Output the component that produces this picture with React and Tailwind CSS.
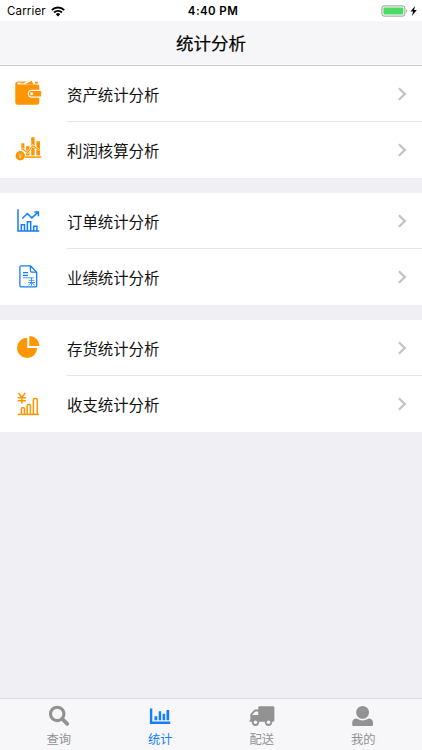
const ORANGE = '#ff9500'
const BLUE = '#147efb'

const RowIcon = ({ children }) => (
  <svg width="28" height="28" viewBox="0 0 28 28" fill="none" className="shrink-0">
    {children}
  </svg>
)

const WalletIcon = () => (
  <RowIcon>
    <path d="M1.3 4.2C1.3 2.4 2.4 1.5 4 1.5h6l-1 1H4.4c-1.6 0-1.6 1.9 0 1.9h18.8c1.4 0 2.1.8 2.1 2.1v3.2H17.8a4 4 0 0 0 0 8h7.5v4.6c0 1.7-.9 2.5-2.5 2.5H3.9c-1.7 0-2.6-.8-2.6-2.5Z" fill={ORANGE} />
    <path d="M10.8 4.4 17.6.7 19.6 4.4ZM20.6 1.7h2.6c.7 0 1 .4 1 1v.8h-3ZM5.5 3.3l5.2-1.7h1.8L9.4 3.6Z" fill={ORANGE} />
    <path d="M17.6 11h9.6v5.4h-9.6a2.7 2.7 0 0 1 0-5.4Z" fill={ORANGE} />
    <circle cx="17.7" cy="13.7" r="1.5" fill="#fff" />
  </RowIcon>
)

const ProfitIcon = () => (
  <RowIcon>
    <path d="M7.4 7.3h3V14h-3ZM12.1 10.2h3.4v9.3h-3.4ZM17.2 1.3h3.4v18.2h-3.4ZM22.4 5.3h3.6v14.2h-3.6Z" fill={ORANGE} />
    <path d="m7.5 12.5 6 3.9 5.3-6.7 6.6 4.5" stroke="#fff" strokeWidth="2.2" />
    <path d="m7.5 12.5 6 3.9 5.3-6.7 6.6 4.5" stroke={ORANGE} strokeWidth="1.1" />
    <path d="M11 21.1h16.2" stroke={ORANGE} strokeWidth="1.5" />
    <circle cx="6.3" cy="19.7" r="4.7" fill={ORANGE} />
    <path d="m4.7 17.3 1.6 2.2 1.6-2.2M6.3 19.5v3M4.9 20h2.8M4.9 21.3h2.8" stroke="#ffe0b3" strokeWidth=".6" />
  </RowIcon>
)

const OrderIcon = () => (
  <RowIcon>
    <g stroke={BLUE} strokeWidth="1.5">
      <path d="M4 2.3v21.6h21.3" />
      <path d="M7.3 24v-6.2h3.2V24M13.4 24v-9.3h3.3V24M19.7 24v-4.7h3.2V24" />
      <path d="m8.3 11.5 5.1-5 4.4 4.4 6.4-5.8M20.3 5h4.1v4.2" />
    </g>
  </RowIcon>
)

const DocumentIcon = () => (
  <RowIcon>
    <path d="M16.4 2.8H7.2a1.3 1.3 0 0 0-1.3 1.3v18.4a1.3 1.3 0 0 0 1.3 1.3h14.2a1.3 1.3 0 0 0 1.3-1.3V9.1Zm0 0v5a1.3 1.3 0 0 0 1.3 1.3h5" stroke={BLUE} strokeWidth="1.3" strokeLinejoin="round" />
    <path d="M9 9.7h5M9 12.3h5" stroke={BLUE} strokeWidth="1.2" />
    <path d="M9 14.8h10.7M14.6 17.3h5.8M17.5 14.8v8M14 19.5h7M17.5 19.4l-3.2 3M17.5 19.4l3.2 3" stroke={BLUE} strokeWidth=".75" />
  </RowIcon>
)

const PieIcon = () => (
  <RowIcon>
    <path d="M13.2 3.8v10.3h10A10.1 10.1 0 1 1 13.2 3.8Z" fill={ORANGE} />
    <path d="M15.3 2c5.5 0 10 4.4 10 10h-10Z" fill={ORANGE} />
  </RowIcon>
)

const IncomeIcon = () => (
  <RowIcon>
    <g stroke={ORANGE} strokeWidth="1.5">
      <path d="m4.5 3 3.4 4.4L11.3 3M7.9 7.3v6.5M3.7 7.8H12M3.7 10.8H12" />
      <path d="M3.6 24.4H25" />
      <path d="M7.4 24v-5.3c0-.6.4-1 1-1h1.1c.6 0 1 .4 1 1V24M13.2 24v-8.6c0-.6.4-1 1-1h1.2c.6 0 1 .4 1 1V24M19.4 24V9.4c0-.6.4-1 1-1h1.8c.6 0 1 .4 1 1V24" />
    </g>
  </RowIcon>
)

const SearchTabIcon = () => (
  <svg width="26" height="22" viewBox="0 0 26 22" fill="none" stroke="currentColor">
    <circle cx="11.2" cy="8.9" r="6.7" strokeWidth="3.1" />
    <path d="m16.4 14 4.8 4.8" strokeWidth="3.8" strokeLinecap="round" />
  </svg>
)

const ChartTabIcon = () => (
  <svg width="26" height="22" viewBox="0 0 26 22" fill="currentColor">
    <path d="M2.9 3.5h2.4v13h17.9V19H2.9ZM7.5 11.3h2.8v4H7.5ZM11.7 6.3h2.5v9h-2.5ZM15.6 8.8h2.6v6.5h-2.6ZM19.5 5h2.7v10.3h-2.7Z" />
  </svg>
)

const TruckTabIcon = () => (
  <svg width="26" height="22" viewBox="0 0 26 22" fill="currentColor">
    <path fillRule="evenodd" d="M10.7 1.2h13.1c1 0 1.6.6 1.6 1.5v12.2c0 1.3-.8 1.8-2.1 1.8H1.3c-1.4 0-1.4-1.5 0-1.5V10c0-.8.3-1.3.8-1.8l2.8-2.9c.5-.5 1-.7 1.7-.7h2.6V2.7c0-.9.6-1.5 1.5-1.5ZM3.4 10h5.8V6.5H6.8c-.4 0-.7.2-1 .5L3.6 9.3c-.2.2-.2.4-.2.7Z" />
    <circle cx="6.5" cy="17.3" r="3.6" />
    <circle cx="19.5" cy="17.3" r="3.6" />
    <circle cx="6.5" cy="17.3" r="1.8" fill="#f7f7f9" />
    <circle cx="19.5" cy="17.3" r="1.8" fill="#f7f7f9" />
  </svg>
)

const UserTabIcon = () => (
  <svg width="26" height="22" viewBox="0 0 26 22" fill="currentColor">
    <circle cx="12.6" cy="7.4" r="6.4" />
    <path d="M6.6 13.6c3.8 2.4 8.2 2.4 12 0 2.9 0 4.4 1.7 4.4 4.3v1.6c0 1-.6 1.5-1.5 1.5H3.7c-.9 0-1.5-.5-1.5-1.5v-1.6c0-2.6 1.5-4.3 4.4-4.3Z" />
  </svg>
)

const groups = [
  [
    { label: '资产统计分析', Icon: WalletIcon },
    { label: '利润核算分析', Icon: ProfitIcon },
  ],
  [
    { label: '订单统计分析', Icon: OrderIcon },
    { label: '业绩统计分析', Icon: DocumentIcon },
  ],
  [
    { label: '存货统计分析', Icon: PieIcon },
    { label: '收支统计分析', Icon: IncomeIcon },
  ],
]

const tabs = [
  { label: '查询', Icon: SearchTabIcon },
  { label: '统计', Icon: ChartTabIcon, active: true },
  { label: '配送', Icon: TruckTabIcon },
  { label: '我的', Icon: UserTabIcon },
]

const StatusBar = () => (
  <div className="grid h-[21px] shrink-0 grid-cols-3 items-center bg-white px-[7px] pt-px font-['Inter','Liberation_Sans',sans-serif] text-[11.5px] leading-none text-black">
    <div className="flex items-center gap-[5px]">
      <span className="pt-px tracking-[0.15px]">Carrier</span>
      <svg width="14" height="11" viewBox="0 0 14 11" fill="none" stroke="#000" strokeWidth="1.9">
        <path d="M.8 4.1a8.8 8.8 0 0 1 12.4 0M3.1 6.5a5.5 5.5 0 0 1 7.8 0" />
        <path d="M4.8 8.2a3.1 3.1 0 0 1 4.4 0L7 10.5Z" fill="#000" stroke="none" />
      </svg>
    </div>
    <span className="pl-[4px] pt-px text-center font-semibold tracking-[0.4px]">4:40 PM</span>
    <div className="-mr-[3px] flex items-center justify-end">
      <svg width="37" height="12" viewBox="0 0 37 12">
        <rect x=".9" y=".9" width="23" height="10.2" rx="2.2" fill="#fff" stroke="#999" />
        <rect x="2.4" y="2.4" width="20" height="7.2" rx="1" fill="#4cd964" />
        <path d="M25.3 4.2c1.3.6 1.3 3 0 3.6Z" fill="#999" />
        <path d="m34 .9-4.4 5.6h2.5l-1.2 4.6 4.9-6h-2.7Z" fill="#000" />
      </svg>
    </div>
  </div>
)

const Row = ({ label, Icon, last }) => (
  <div className="flex h-14 items-center pl-[14px]">
    <Icon />
    <div className={`ml-[25px] flex h-full flex-1 items-center justify-between pr-[15px] ${last ? '' : 'border-b border-[#e6e6e9]'}`}>
      <span className="pt-[2px] text-[15.4px] leading-none text-[#111]">{label}</span>
      <svg width="10" height="14" viewBox="0 0 10 14" fill="none" stroke="#c2c2c6" strokeWidth="2.2">
        <path d="m1.9 1.2 5.9 5.8-5.9 5.8" />
      </svg>
    </div>
  </div>
)

export default function App() {
  return (
    <div className="flex h-[750px] w-[422px] flex-col overflow-hidden bg-[#efeff4] font-['Noto_Sans_CJK_SC',sans-serif]">
      <StatusBar />
      <header className="flex h-[45px] shrink-0 items-center justify-center border-b border-[#cdcdd0] bg-[#f6f6f8]">
        <h1 className="text-[17.5px] font-normal leading-none text-black [-webkit-text-stroke:0.2px_#000]">统计分析</h1>
      </header>

      <main className="flex flex-1 flex-col gap-[15px]">
        {groups.map((rows, i) => (
          <section key={i} className="bg-white">
            {rows.map((row, j) => (
              <Row key={row.label} {...row} last={j === rows.length - 1} />
            ))}
          </section>
        ))}
      </main>

      {/* Bottom tabs */}
      <nav className="flex h-[52px] shrink-0 border-t border-[#dcdce0] bg-[#f7f7f9] px-[8px]">
        {tabs.map(({ label, Icon, active }) => (
          <div key={label} className={`flex flex-1 flex-col items-center pt-[6px] ${active ? 'text-[#147efb]' : 'text-[#929292]'}`}>
            <Icon />
            <span className="mt-[6px] text-[12.3px] leading-none">{label}</span>
          </div>
        ))}
      </nav>
    </div>
  )
}
